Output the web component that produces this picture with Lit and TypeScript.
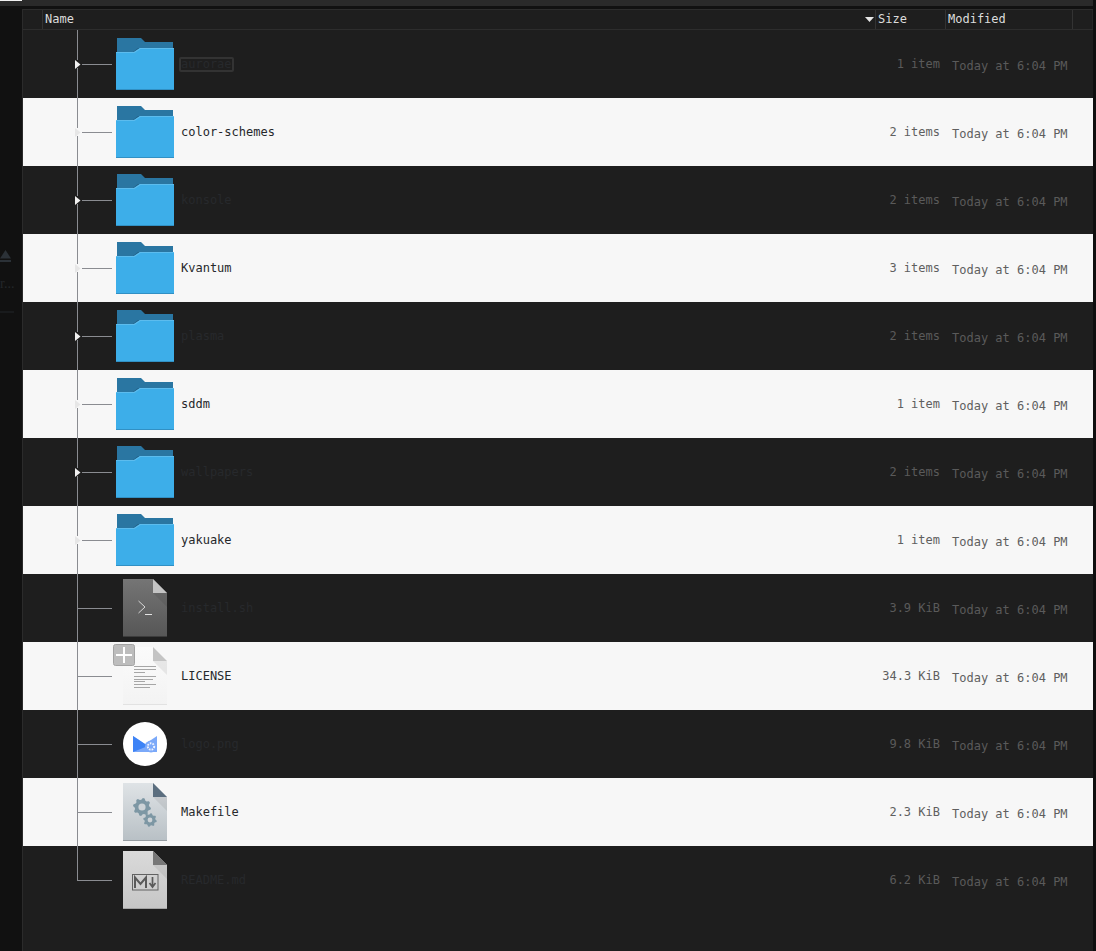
import { LitElement, html, css, svg } from "lit";
import { customElement } from "lit/decorators.js";

type Kind = "folder" | "shell" | "text" | "image" | "make" | "md";
interface Row { name: string; size: string; kind: Kind; }

const ROWS: Row[] = [
  { name: "aurorae", size: "1 item", kind: "folder" },
  { name: "color-schemes", size: "2 items", kind: "folder" },
  { name: "konsole", size: "2 items", kind: "folder" },
  { name: "Kvantum", size: "3 items", kind: "folder" },
  { name: "plasma", size: "2 items", kind: "folder" },
  { name: "sddm", size: "1 item", kind: "folder" },
  { name: "wallpapers", size: "2 items", kind: "folder" },
  { name: "yakuake", size: "1 item", kind: "folder" },
  { name: "install.sh", size: "3.9 KiB", kind: "shell" },
  { name: "LICENSE", size: "34.3 KiB", kind: "text" },
  { name: "logo.png", size: "9.8 KiB", kind: "image" },
  { name: "Makefile", size: "2.3 KiB", kind: "make" },
  { name: "README.md", size: "6.2 KiB", kind: "md" },
];

const folderIcon = () => html`<svg width="58" height="52" viewBox="0 0 58 52" shape-rendering="geometricPrecision">
  <path d="M1 0H25L29 4H57V14H1Z" fill="#2a76a2"/>
  <path d="M1 14H17L22 10H57V14Z" fill="#235f84"/>
  <path d="M0 14H18L24 10H58V52H0Z" fill="#3daee9"/>
  <path d="M0 14H18L24 10H58V11H24.5L18.5 15H0Z" fill="#5cbcee"/>
  <rect y="51" width="58" height="1" fill="#3190c4"/>
</svg>`;

const filePaper = (id: string, top: string, bottom: string, edge: string, fold: string, inner: unknown) =>
  html`<svg width="44" height="58" viewBox="0 0 44 58">
    <defs><linearGradient id=${id} x1="0" y1="0" x2="0" y2="1">
      <stop offset="0" stop-color=${top}/><stop offset="1" stop-color=${bottom}/>
    </linearGradient></defs>
    <path d="M0 0H30L44 14V58H0Z" fill="url(#${id})"/>
    <rect y="57" width="44" height="1" fill=${edge}/>
    <path d="M30 14H44V28Z" fill="#000" opacity=".07"/>
    <path d="M30 0L44 14H30Z" fill=${fold}/>
    ${inner}
  </svg>`;

const gear = (cx: number, cy: number, r: number, hole: number, teeth: number, col: string) => {
  const pts: string[] = [];
  const n = teeth * 4;
  for (let i = 0; i < n; i++) {
    const a = (i + 0.5) / n * Math.PI * 2;
    const rr = i % 4 < 2 ? r : r * 0.8;
    pts.push(`${(cx + Math.cos(a) * rr).toFixed(2)},${(cy + Math.sin(a) * rr).toFixed(2)}`);
  }
  return svg`<polygon points=${pts.join(" ")} fill=${col}/><circle cx=${cx} cy=${cy} r=${hole} fill="#cdd3d7"/>`;
};

const LICENSE_LINES: [number, number][] = [[19, 22], [22, 22], [25, 11], [29, 22], [32, 19], [34, 11], [37, 22], [40, 16]];

function iconFor(kind: Kind) {
  switch (kind) {
    case "folder":
      return folderIcon();
    case "shell":
      return filePaper("g-shell", "#757575", "#565656", "#3c3c3c", "#c4c4c4", svg`
        <path d="M15.5 22L22 28L15.5 34" fill="none" stroke="#d8d8d8" stroke-width="1"/>
        <rect x="22" y="35" width="7" height="1" fill="#e4e4e4"/>`);
    case "text":
      return filePaper("g-text", "#fbfbfb", "#f3f3f3", "#e2e2e2", "#c4c4c4",
        LICENSE_LINES.map(([y, w]) => svg`<rect x="11" y=${y} width=${w} height="1" fill="#a6a6a6"/>`));
    case "image":
      return html`<svg width="44" height="44" viewBox="0 0 44 44">
        <circle cx="22" cy="22" r="22" fill="#fff"/>
        <path d="M10 14L22 22L34 14V30H10Z" fill="#7ba9f9"/>
        <path d="M10 14L25 24L10 30Z" fill="#3d83f6"/>
        <circle cx="28" cy="24.5" r="6" fill="#7ba9f9"/>
        <circle cx="28" cy="24.5" r="3.2" fill="none" stroke="#eef3ff" stroke-width="2" stroke-dasharray="1.6 1.1"/>
      </svg>`;
    case "make":
      return filePaper("g-make", "#dfe3e6", "#b8c0c5", "#959ca1", "#5b6e7f",
        svg`${gear(19, 24, 9, 3.6, 8, "#7d97a4")}${gear(27, 37, 6.8, 2.4, 8, "#7d97a4")}`);
    case "md":
      return filePaper("g-md", "#dadada", "#c6c6c6", "#a3a3a3", "#777", svg`
        <rect x="9.5" y="23.5" width="25.5" height="15.5" fill="none" stroke="#626262"/>
        <path d="M12 37V26.5L17.5 33L23 26.5V37" fill="none" stroke="#5a5a5a" stroke-width="2"/>
        <path d="M29.5 26V35M26.5 32L29.5 36L32.5 32" fill="none" stroke="#5a5a5a" stroke-width="1.7"/>`);
  }
}

function treeGutter(kind: Kind, last: boolean, dark: boolean) {
  const line = "#8a8c91";
  const isFolder = kind === "folder";
  return html`<svg class="gutter" width="89" height="68" viewBox="0 0 89 68" shape-rendering="crispEdges">
    ${isFolder
      ? svg`<rect x="54" width="1" height="30" fill=${line}/>
            <rect x="54" y="38" width="1" height="30" fill=${line}/>
            <rect x="59" y="34" width="30" height="1" fill=${line}/>`
      : svg`<rect x="54" width="1" height=${last ? 35 : 68} fill=${line}/>
            <rect x="54" y="34" width="35" height="1" fill=${line}/>`}
    ${isFolder
      ? svg`<path d="M52 30L57.5 34.5L52 39Z" fill=${dark ? "#f0f0f0" : "#e6e6e6"} shape-rendering="geometricPrecision"/>`
      : ""}
  </svg>`;
}

@customElement("app-root")
export class AppRoot extends LitElement {
  static styles = css`
    :host {
      display: block;
      width: 1096px;
      height: 951px;
      overflow: hidden;
      background: #0f0f0f;
      font-family: "DejaVu Sans Mono", "Liberation Mono", monospace;
      font-size: 12px;
    }
    .shell { display: flex; height: 951px; }
    .window { width: 1093px; display: flex; flex-direction: column; }
    .strip { width: 3px; background: #0f0f0f; }
    .topbar { height: 6px; background: #2a2a2a; flex: none; }
    .topbar .tick { width: 22px; height: 1px; background: #f2f2f2; }
    .gap { height: 3px; flex: none; background: #111; }
    .body { flex: 1; display: flex; min-height: 0; }
    .side { width: 22px; flex: none; background: #111; position: relative; overflow: hidden; }
    .eject { display: block; margin-top: 241px; }
    .side .label {
      margin-top: 14px;
      font-family: "Liberation Serif", serif;
      font-size: 14px;
      line-height: 16px;
      color: #24272a;
      white-space: nowrap;
    }
    .side .rule { width: 14px; height: 2px; margin-top: 19px; background: #191b1d; }
    .main { flex: 1; background: #1e1e1e; border-left: 1px solid #2b2b2b; min-width: 0; }
    .head {
      display: grid;
      grid-template-columns: 20px 833px 70px 127px 1fr;
      height: 21px;
      box-sizing: border-box;
      border-top: 1px solid #2d2d2d;
      border-bottom: 1px solid #2d2d2d;
      color: #dcdcdc;
      line-height: 18px;
    }
    .head > div {
      box-sizing: border-box;
      border-right: 1px solid #333;
      padding-left: 2px;
      position: relative;
    }
    .head > div:last-child { border-right: 1px solid #262626; }
    .sort { position: absolute; right: 1px; top: 7px; display: block; }
    .row {
      display: grid;
      grid-template-columns: 89px 66px 682px 80px 153px;
      align-items: center;
      height: 68px;
      position: relative;
      background: #1e1e1e;
      color: #5a5a5a;
    }
    .row.light { background: #f7f7f7; color: #5f5f5f; }
    .gutter { display: block; }
    .icon { display: flex; justify-content: center; align-items: center; }
    .icon svg { display: block; }
    .name { padding-left: 1px; color: #27292c; line-height: 15px; }
    .light .name { color: #26282b; }
    .name span { display: inline-block; border: 2px solid transparent; line-height: 11px; padding: 0; }
    .name span.focus { border-color: #333; border-radius: 2px; }
    .size { text-align: right; }
    .date { padding-left: 12px; padding-top: 4px; }
    .badge {
      position: absolute;
      left: 90px;
      top: 2px;
      display: block;
    }
  `;

  render() {
    return html`<div class="shell">
      <div class="window">
        <div class="topbar"><div class="tick"></div></div>
        <div class="gap"></div>
        <div class="body">
          <div class="side">
            <svg class="eject" width="12" height="12" viewBox="0 0 12 12">
              <path d="M0 8.5L5.5 0L11 8.5Z" fill="#2b3137"/>
              <rect y="10" width="11" height="2" fill="#2b3137"/>
            </svg>
            <div class="label">r...</div>
            <div class="rule"></div>
          </div>
          <div class="main">
            <div class="head">
              <div></div>
              <div>Name
                <svg class="sort" width="9" height="5" viewBox="0 0 9 5"><path d="M0 0H9L4.5 5Z" fill="#e6e6e6"/></svg>
              </div>
              <div>Size</div>
              <div>Modified</div>
              <div></div>
            </div>
            ${ROWS.map((r, i) => {
              const light = i % 2 === 1;
              return html`<div class="row ${light ? "light" : ""}">
                ${treeGutter(r.kind, i === ROWS.length - 1, !light)}
                <div class="icon">${iconFor(r.kind)}</div>
                <div class="name"><span class=${i === 0 ? "focus" : ""}>${r.name}</span></div>
                <div class="size">${r.size}</div>
                <div class="date">Today at 6:04 PM</div>
                ${r.kind === "text"
                  ? html`<svg class="badge" width="22" height="22" viewBox="0 0 22 22">
                      <rect x=".5" y=".5" width="21" height="21" rx="2" fill="#bdbdbd" stroke="#a4a4a4"/>
                      <rect x="3" y="10" width="16" height="2" fill="#fff"/>
                      <rect x="10" y="3" width="2" height="16" fill="#fff"/>
                    </svg>`
                  : ""}
              </div>`;
            })}
          </div>
        </div>
      </div>
      <div class="strip"></div>
    </div>`;
  }
}
